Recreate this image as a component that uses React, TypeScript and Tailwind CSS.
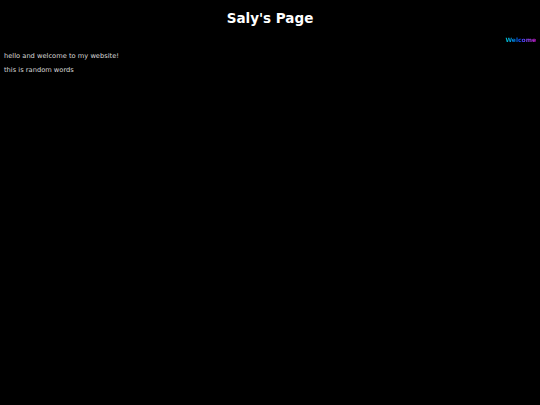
export default function App() {
  return (
    <div
      className="min-h-[405px] w-full bg-black text-[#d8d8d8]"
      style={{ fontFamily: '"DejaVu Sans", sans-serif' }}
    >
      <h1 className="pt-[10px] text-center text-[13.5px] font-bold leading-[16px] text-white">Saly's Page</h1>
      <div className="flex justify-end pr-[4px] pt-[10px]">
        <span className="bg-gradient-to-r from-[#00c8c8] via-[#2040ff] to-[#e000e0] bg-clip-text text-[6px] font-bold leading-[8px] text-transparent">
          Welcome
        </span>
      </div>
      <p className="mt-[8px] pl-[4px] text-[6.7px] leading-[8px]">hello and welcome to my website!</p>
      <p className="mt-[6px] pl-[4px] text-[6.7px] leading-[8px]">this is random words</p>
    </div>
  );
}
